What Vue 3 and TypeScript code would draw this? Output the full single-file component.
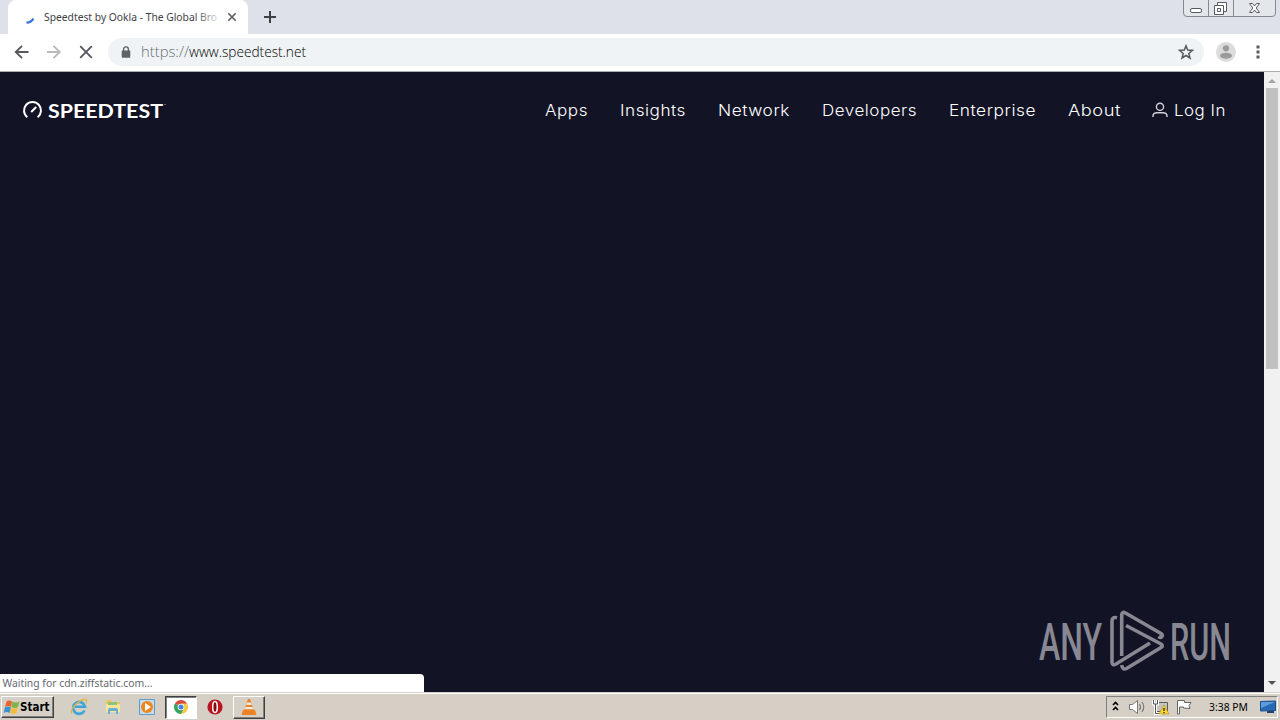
<script setup lang="ts">
interface NavItem {
  label: string
  width: number
}

const navItems: NavItem[] = [
  { label: 'Apps', width: 43 },
  { label: 'Insights', width: 66 },
  { label: 'Network', width: 72 },
  { label: 'Developers', width: 95 },
  { label: 'Enterprise', width: 87 },
  { label: 'About', width: 53 },
]
</script>

<template>
  <div class="desktop">
    <header class="tabstrip">
      <div class="edge"></div>
      <div class="tab">
        <svg class="spinner" width="12" height="12" viewBox="0 0 12 12">
          <path d="M1.500 9.600Q6.500 9.500 8.300 5.500" fill="none" stroke="#3871d8" stroke-width="2.200" />
        </svg>
        <svg class="tab-title" width="176" height="20">
          <defs>
            <linearGradient id="fade" gradientUnits="userSpaceOnUse" x1="0" x2="176" y1="0" y2="0">
              <stop offset=".86" stop-color="#3c4043" />
              <stop offset="1" stop-color="#3c4043" stop-opacity=".15" />
            </linearGradient>
          </defs>
          <text x="1" y="14" textLength="173" lengthAdjust="spacingAndGlyphs" fill="url(#fade)">Speedtest by Ookla - The Global Bro</text>
        </svg>
        <svg class="tab-close" width="10" height="10" viewBox="0 0 10 10">
          <path d="M1.300 1.300l7.400 7.400M8.700 1.300L1.300 8.700" stroke="#5a5d61" stroke-width="1.600" />
        </svg>
      </div>
      <svg class="plus" width="14" height="14" viewBox="0 0 14 14">
        <path d="M7 1v12M1 7h12" stroke="#3c4043" stroke-width="2" />
      </svg>
      <svg class="window-buttons" width="94" height="18" viewBox="0 0 94 18">
        <path d="M.5 0v13q0 3.500 3.500 3.500h85q3.500 0 3.500-3.500V0M25.500 0v16.500M50.500 0v16.500" fill="#e3e6eb" stroke="#858991" />
        <rect x="7.500" y="8.500" width="11" height="4" rx="1.500" fill="#fff" stroke="#555a63" />
        <path d="M34.500 2.500h9v9h-9z" fill="#fff" stroke="#555a63" />
        <path d="M31.500 5.500h9v9h-9z" fill="#fff" stroke="#555a63" />
        <path d="M34.500 8.500h3v3h-3z" fill="#fff" stroke="#555a63" />
        <path d="M66.500 3.500h3l2 2.500 2-2.500h3l-3.300 4.500 3.300 4.500h-3l-2-2.500-2 2.500h-3l3.300-4.500z" fill="#fff" stroke="#555a63" />
      </svg>
    </header>

    <div class="toolbar">
      <svg class="nav-buttons" width="84" height="16" viewBox="0 0 84 16">
        <g fill="none" stroke-width="1.900">
          <path d="M14.500 8H2M8 1.800L1.800 8 8 14.200" stroke="#55585c" />
          <path d="M33 8H45.500M39.500 1.800L45.700 8 39.500 14.200" stroke="#b8babd" />
          <path d="M66.200 2.200l11.600 11.600M77.800 2.200L66.200 13.800" stroke="#55585c" />
        </g>
      </svg>
      <div class="omnibox">
        <svg width="10" height="12" viewBox="0 0 10 12">
          <path d="M2.600 5V3.300a2.400 2.400 0 0 1 4.800 0V5" fill="none" stroke="#5f6368" stroke-width="1.400" />
          <rect x=".7" y="4.500" width="8.600" height="7.200" rx="1" fill="#5f6368" />
        </svg>
        <svg class="url" width="172" height="22">
          <text x="0" y="16" textLength="48" lengthAdjust="spacingAndGlyphs" fill="#6a6e73">https://</text>
          <text x="48" y="16" textLength="117" lengthAdjust="spacingAndGlyphs" fill="#000">www.speedtest.net</text>
        </svg>
        <svg class="star" width="16" height="16" viewBox="0 0 16 16">
          <path d="M8 1.800l1.700 4.300 4.700.3-3.600 3 1.200 4.600L8 11.500 4 14l1.200-4.600-3.600-3 4.700-.3z" fill="none" stroke="#55595e" stroke-width="1.500" />
        </svg>
      </div>
      <svg class="avatar" width="20" height="20" viewBox="0 0 20 20">
        <circle cx="10" cy="10" r="10" fill="#dcdcdc" />
        <circle cx="10" cy="6.300" r="3.100" fill="#9b9b9b" />
        <ellipse cx="10" cy="13.700" rx="6" ry="3" fill="#9b9b9b" />
      </svg>
      <svg class="more" width="4" height="14" viewBox="0 0 4 14">
        <path d="M.5.500h3v3h-3zM.5 5.500h3v3h-3zM.5 10.500h3v3h-3z" fill="#5a5d61" />
      </svg>
    </div>

    <main class="viewport">
      <section class="page">
        <div class="site-header">
          <svg class="brand" width="146" height="24" viewBox="0 0 146 24">
            <path d="M5.300 19.200A8.500 8.500 0 1 1 15.700 19.200M9.200 14l5-5" fill="none" stroke="#fff" stroke-width="2" />
            <text x="26" y="19.500" textLength="115" lengthAdjust="spacingAndGlyphs" fill="#fff">SPEEDTEST</text>
            <circle cx="143" cy="6.500" r=".6" fill="#b9bac6" />
          </svg>
          <nav class="links">
            <svg v-for="item in navItems" :key="item.label" :width="item.width" height="24">
              <text x="1" y="18" :textLength="item.width" lengthAdjust="spacingAndGlyphs">{{ item.label }}</text>
            </svg>
            <div class="login">
              <svg width="16" height="16" viewBox="0 0 16 16">
                <circle cx="8" cy="4.800" r="3.600" fill="none" stroke="#d0d1dc" stroke-width="1.400" />
                <path d="M1 15v-1.200Q1.300 10.700 5 10.700h6q3.700 0 4 3.100V15" fill="none" stroke="#d0d1dc" stroke-width="1.400" />
              </svg>
              <svg width="52" height="24"><text x="0" y="18" textLength="52" lengthAdjust="spacingAndGlyphs">Log In</text></svg>
            </div>
          </nav>
        </div>
        <svg class="watermark" width="194" height="64" viewBox="0 0 194 64">
          <g class="mark-text">
            <text x="1" y="51.500" textLength="63" lengthAdjust="spacingAndGlyphs">ANY</text>
            <text x="132" y="51.500" textLength="61" lengthAdjust="spacingAndGlyphs">RUN</text>
          </g>
          <g fill="none" stroke="#878892" stroke-width="3.600" stroke-linejoin="round">
            <path d="M79 9.700Q74 8.500 74 13V54.500Q74.500 58 78 56L112 35" />
            <path d="M83.700 48V7Q84 3 87.500 5L123 25.500Q125.500 27.500 123.500 29Q122.500 30 120.500 28.500" />
            <path d="M88 17.500L123 36Q125.500 38 123 39.500L88.500 60.500Q84.500 62.500 83.700 57" />
          </g>
        </svg>
        <div class="status">
          <svg width="160" height="18"><text x="2.500" y="13" textLength="150" lengthAdjust="spacingAndGlyphs">Waiting for cdn.ziffstatic.com...</text></svg>
        </div>
      </section>
      <aside class="scrollbar">
        <svg width="16" height="16"><path d="M4 11l4-4 4 4z" fill="#a3a3a3" /></svg>
        <div class="thumb"></div>
        <svg class="down" width="16" height="16"><path d="M4 5l4 4 4-4z" fill="#505050" /></svg>
      </aside>
    </main>

    <footer class="taskbar">
      <div class="start">
        <svg width="16" height="16" viewBox="0 0 16 16">
          <path d="M2.500 2.500q2.500-2 5.500 0L7 8Q4 6 1 8z" fill="#e9642e" />
          <path d="M8.500 2.500q3 2 7 0l-1.500 5.500q-3 2-6.500 0z" fill="#7bb54b" />
          <path d="M.8 8.500q3-2 6 0l-1 5.500q-3-2-6 0z" fill="#3e91cf" />
          <path d="M7.500 8.500q3 2 6.500 0l-1.500 5.500q-3 2-6 0z" fill="#f6bd35" />
        </svg>
        <svg width="30" height="16"><text x="0" y="12" textLength="29.500" lengthAdjust="spacingAndGlyphs">Start</text></svg>
      </div>
      <div class="task">
        <svg width="18" height="18" viewBox="0 0 18 18">
          <path d="M14.500 12.500A6 6 0 1 1 15 8.800H5" fill="none" stroke="#3ba5dc" stroke-width="2.600" />
          <path d="M2 15.500C-1 12 9 1 15.500 1.500Q17.500 2 16 5" fill="none" stroke="#e4b440" stroke-width="1.300" />
        </svg>
      </div>
      <div class="task">
        <svg width="16" height="16" viewBox="0 0 16 16">
          <path d="M1 3l1-2h4l1 2h8v10H1z" fill="#e9c65b" />
          <path d="M1 5h14v8H1z" fill="#f8e49a" />
          <path d="M3 3h9v3H3z" fill="#91c27a" />
          <path d="M3 15v-4q0-2 2-2h6q2 0 2 2v4h-2v-3H5v3z" fill="#65afd5" />
        </svg>
      </div>
      <div class="task">
        <svg width="16" height="16" viewBox="0 0 16 16">
          <path d="M.5.500h15v15H.5z" fill="#c5dcec" stroke="#5b9dcc" />
          <circle cx="8" cy="8" r="6" fill="#ee861e" />
          <path d="M6 4l6 4-6 4z" fill="#fff" />
        </svg>
      </div>
      <div class="task pressed">
        <svg width="14" height="14" viewBox="0 0 14 14">
          <path d="M7 7L.9 3.500A7 7 0 0 1 13.100 3.500z" fill="#d94a3d" />
          <path d="M7 7L.9 3.500A7 7 0 0 0 7 14l3-5.300z" fill="#38a260" />
          <path d="M7 3.500h6.100A7 7 0 0 1 7 14l3-5.300z" fill="#f4c83f" />
          <circle cx="7" cy="7" r="3.300" fill="#fff" />
          <circle cx="7" cy="7" r="2.500" fill="#4384df" />
        </svg>
      </div>
      <div class="task">
        <svg width="16" height="16" viewBox="0 0 16 16">
          <circle cx="8" cy="8" r="7.600" fill="#b9151e" />
          <ellipse cx="8" cy="8" rx="2.300" ry="5.500" fill="#8b0a12" stroke="#fff" stroke-width="1.500" />
        </svg>
      </div>
      <div class="task raised">
        <svg width="16" height="16" viewBox="0 0 16 16">
          <path d="M7 0h2l4 12H3z" fill="#ee8122" />
          <path d="M6 3.500h4l.8 2.500H5.200zM4.500 8h7l.7 2.200H3.800z" fill="#eeeae2" />
          <path d="M2 11h12l1.500 5H.5z" fill="#ed8126" />
        </svg>
      </div>
      <div class="tray">
        <svg class="tray-icons" width="88" height="18" viewBox="0 0 88 18">
          <path d="M2 7l2.500-2.500L7 7M2 12l2.500-2.500L7 12" fill="none" stroke="#000" stroke-width="1.600" />
          <path d="M18.500 6.500h3l5-4v13l-5-4h-3z" fill="#fff" stroke="#777" />
          <path d="M28.500 6q2 3 0 6M31 4q3.500 5 0 10" fill="none" stroke="#777" stroke-width="1.100" />
          <path d="M45 4.500h11.500v9H45z" fill="#c4c4bd" stroke="#5c5c58" />
          <path d="M42.500 2v4h4V2M44.500 6v9.500h6" fill="none" stroke="#fff" stroke-width="3" />
          <path d="M42.500 2v4h4V2M44.500 6v9.500h6" fill="none" stroke="#555" />
          <path d="M53 7l5 9H48z" fill="#ffd92d" stroke="#b49a1d" stroke-width=".7" />
          <path d="M53 10v3M53 14v1.200" stroke="#222" stroke-width="1.300" />
          <path d="M66.500 16V2.500h7v2h6.500l-2 3 1 3-6.500-.5v-1h-4v7z" fill="#fff" stroke="#666" />
        </svg>
        <svg class="clock" width="40" height="16"><text x="0" y="12" textLength="39" lengthAdjust="spacingAndGlyphs">3:38 PM</text></svg>
        <svg class="monitor" width="16" height="14" viewBox="0 0 16 14">
          <path d="M.5 1.500l15-.5v9.500l-15 .5z" fill="#2869b5" stroke="#1d4d8b" />
          <path d="M1 2h14L1 8z" fill="#5b9ddb" />
          <path d="M7 11h7v2H7z" fill="#24446f" />
        </svg>
      </div>
    </footer>
  </div>
</template>

<style>
html,
body {
  margin: 0;
  overflow: hidden;
}
</style>

<style scoped>
.desktop {
  width: 1280px;
  height: 720px;
  display: flex;
  flex-direction: column;
  font-family: "DejaVu Sans Condensed", "DejaVu Sans", sans-serif;
  background: #131326;
}
svg {
  display: block;
  flex: none;
  overflow: visible;
}
.tabstrip {
  height: 34px;
  flex: none;
  display: flex;
  background: #dee1e9;
}
.edge {
  width: 8px;
}
.tab {
  width: 240px;
  box-sizing: border-box;
  padding-left: 17px;
  background: #fff;
  border-radius: 8px 8px 0 0;
  display: flex;
  align-items: center;
}
.spinner {
  margin-top: 4px;
}
.tab-title {
  margin-left: 6px;
  font-family: "Noto Sans", sans-serif;
  font-size: 11.5px;
}
.tab-close {
  margin-left: 8px;
}
.plus {
  margin: 10px 0 0 15px;
}
.window-buttons {
  margin-left: auto;
  margin-right: 3px;
}
.toolbar {
  height: 38px;
  flex: none;
  box-sizing: border-box;
  padding: 0 0 1px 14px;
  border-bottom: 1px solid #a9acb1;
  background: #fff;
  display: flex;
  align-items: center;
}
.nav-buttons {
  margin-right: 10px;
}
.omnibox {
  width: 1096px;
  height: 28px;
  box-sizing: border-box;
  padding: 0 10px 0 13px;
  border-radius: 14px;
  background: #f0f3f5;
  display: flex;
  align-items: center;
}
.url {
  margin-left: 10px;
  font-family: "Open Sans", "Noto Sans", sans-serif;
  font-size: 14.5px;
  font-weight: 300;
}
.star {
  margin-left: auto;
}
.avatar {
  margin-left: 12px;
}
.more {
  margin-left: 20px;
}
.viewport {
  height: 620px;
  flex: none;
  display: flex;
}
.page {
  width: 1264px;
  display: flex;
  flex-direction: column;
  background: #131326;
}
.site-header {
  height: 76px;
  display: flex;
  align-items: center;
  justify-content: space-between;
  padding: 0 38px 0 22px;
}
.brand {
  font-family: Lato, sans-serif;
  font-size: 19.5px;
  font-weight: 700;
}
.links {
  display: flex;
  align-items: center;
  gap: 32px;
  font-family: Inter, sans-serif;
  font-size: 16.3px;
  font-weight: 300;
  letter-spacing: 0.5px;
  fill: #fff;
}
.login {
  display: flex;
  align-items: center;
  gap: 6px;
}
.watermark {
  margin: auto 32px 2px auto;
}
.mark-text {
  font-family: Roboto, sans-serif;
  font-size: 52px;
  font-weight: 500;
  fill: #878892;
}
.status {
  width: 424px;
  height: 18px;
  background: #fff;
  border-top-right-radius: 4px;
  font-family: "Noto Sans", sans-serif;
  font-size: 11.5px;
  fill: #66696e;
}
.scrollbar {
  width: 16px;
  display: flex;
  flex-direction: column;
  background: #f1f1f1;
}
.thumb {
  width: 12px;
  height: 281px;
  margin-left: 2px;
  background: #c1c1c1;
}
.down {
  margin-top: auto;
}
.taskbar {
  height: 28px;
  flex: none;
  box-sizing: border-box;
  padding: 2px 2px 1px 1px;
  border-top: 1px solid #d4d0c8;
  box-shadow: inset 0 1px #fff;
  background: #d6cfc6;
  display: flex;
  align-items: center;
}
.start {
  width: 53px;
  height: 22px;
  box-sizing: border-box;
  border: 1px solid #fff;
  border-right-color: #404040;
  border-bottom-color: #404040;
  box-shadow: inset -1px -1px #808080;
  display: flex;
  align-items: center;
  padding-left: 2px;
  font-size: 11.5px;
  font-weight: 700;
  margin-right: 9px;
}
.task {
  width: 32px;
  height: 23px;
  margin-right: 2px;
  box-sizing: border-box;
  display: flex;
  align-items: center;
  justify-content: center;
}
.pressed {
  border: 1px solid #404040;
  border-right-color: #fff;
  border-bottom-color: #fff;
  box-shadow: inset 1px 1px #808080;
  background: #fff;
}
.raised {
  border: 1px solid #fff;
  border-right-color: #404040;
  border-bottom-color: #404040;
  box-shadow: inset -1px -1px #808080;
}
.tray {
  width: 172px;
  height: 22px;
  box-sizing: border-box;
  margin-left: auto;
  padding-left: 4px;
  border: 1px solid #808080;
  border-right-color: #fff;
  border-bottom-color: #fff;
  display: flex;
  align-items: center;
}
.clock {
  margin-left: 10px;
  font-family: "Noto Sans", sans-serif;
  font-size: 11.5px;
}
.monitor {
  margin-left: 11px;
}
</style>
